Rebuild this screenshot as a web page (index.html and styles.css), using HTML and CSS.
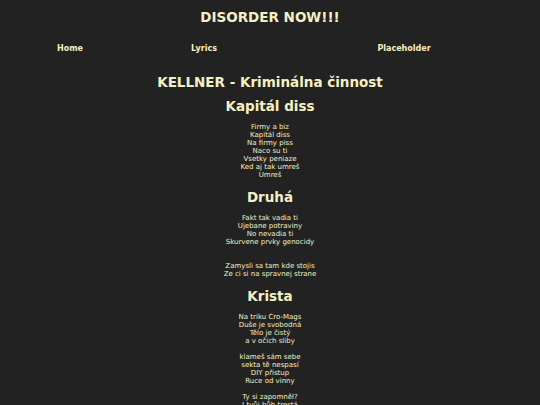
FILE: index.html
```html
<!DOCTYPE html>
<html lang="sk">
<head>
<meta charset="utf-8">
<title>DISORDER NOW!!!</title>
<link rel="stylesheet" href="styles.css">
</head>
<body>
<header class="site-header">
  <h1 class="site-title">DISORDER NOW!!!</h1>
  <nav class="nav">
    <a class="nav-link" href="#">Home</a>
    <a class="nav-link" href="#">Lyrics</a>
    <a class="nav-link" href="#">Placeholder</a>
  </nav>
</header>
<main class="content">
  <h2 class="album">KELLNER - Kriminálna činnost</h2>

  <section class="song">
    <h3 class="song-title">Kapitál diss</h3>
    <p class="stanza">Firmy a biz<br>Kapitál diss<br>Na firmy piss<br>Naco su ti<br>Vsetky peniaze<br>Ked aj tak umreš<br>Umreš</p>
  </section>

  <section class="song">
    <h3 class="song-title">Druhá</h3>
    <p class="stanza">Fakt tak vadia ti<br>Ujebane potraviny<br>No nevadia ti<br>Skurvene prvky genocidy</p>
    <p class="stanza stanza-wide">Zamysli sa tam kde stojis<br>Ze ci si na spravnej strane</p>
  </section>

  <section class="song">
    <h3 class="song-title">Krista</h3>
    <p class="stanza">Na triku Cro-Mags<br>Duše je svobodná<br>Tělo je čistý<br>a v očich sliby</p>
    <p class="stanza">klameš sám sebe<br>sekta tě nespasí<br>DIY přistup<br>Ruce od vinny</p>
    <p class="stanza">Ty si zapomněl?<br>I tvůj bůh trestá</p>
  </section>
</main>
</body>
</html>
```

FILE: styles.css
```css
html {
  background: #222222;
}

body {
  margin: 8px;
  background: #222222;
  color: #f5f0c3;
  font-family: "DejaVu Sans", Verdana, sans-serif;
  text-align: center;
}

.site-title {
  margin: 1px 0 0;
  font-size: 13.5px;
  line-height: 16px;
  font-weight: bold;
}

.nav {
  display: grid;
  grid-template-columns: 124fr 144fr 256fr;
  margin-top: 18.5px;
}

.nav-link {
  color: #f5f0c3;
  text-decoration: none;
  font-size: 8px;
  line-height: 10px;
  font-weight: bold;
  text-align: center;
}

.content {
  margin-top: 20px;
}

.album {
  margin: 0 0 8px;
  font-size: 13.5px;
  line-height: 16px;
  font-weight: bold;
}

.song-title {
  margin: 10px 0 9px;
  font-size: 13.5px;
  line-height: 16px;
  font-weight: bold;
}

.song:first-of-type .song-title {
  margin-top: 8px;
}

.stanza {
  margin: 8px 0 0;
  font-size: 7px;
  line-height: 8px;
}

.song-title + .stanza {
  margin-top: 0;
}

.stanza-wide {
  margin-top: 16px;
}
```
